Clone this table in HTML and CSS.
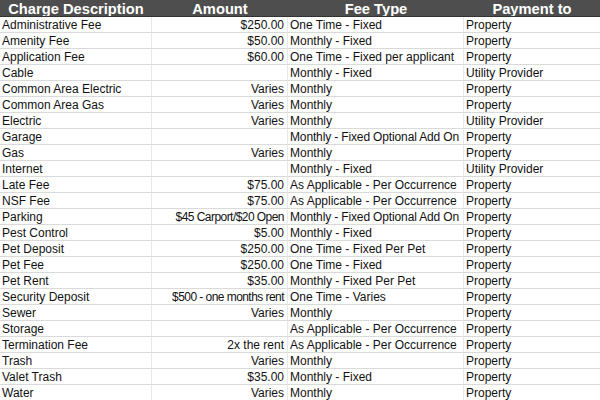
FILE: index.html
```html
<!DOCTYPE html>
<html>
<head>
<meta charset="utf-8">
<link rel="stylesheet" href="styles.css">
</head>
<body>
<div class="sheet">
  <div class="row head">
    <div class="c">Charge Description</div><div class="c">Amount</div><div class="c">Fee Type</div><div class="c">Payment to</div>
  </div>
  <div class="row"><div class="c">Administrative Fee</div><div class="c num">$250.00</div><div class="c">One Time - Fixed</div><div class="c">Property</div></div>
  <div class="row"><div class="c">Amenity Fee</div><div class="c num">$50.00</div><div class="c">Monthly - Fixed</div><div class="c">Property</div></div>
  <div class="row"><div class="c">Application Fee</div><div class="c num">$60.00</div><div class="c">One Time - Fixed per applicant</div><div class="c">Property</div></div>
  <div class="row"><div class="c">Cable</div><div class="c num"></div><div class="c">Monthly - Fixed</div><div class="c">Utility Provider</div></div>
  <div class="row"><div class="c">Common Area Electric</div><div class="c num">Varies</div><div class="c">Monthly</div><div class="c">Property</div></div>
  <div class="row"><div class="c">Common Area Gas</div><div class="c num">Varies</div><div class="c">Monthly</div><div class="c">Property</div></div>
  <div class="row"><div class="c">Electric</div><div class="c num">Varies</div><div class="c">Monthly</div><div class="c">Utility Provider</div></div>
  <div class="row"><div class="c">Garage</div><div class="c num"></div><div class="c"><span class="fit-m">Monthly - Fixed Optional Add On</span></div><div class="c">Property</div></div>
  <div class="row"><div class="c">Gas</div><div class="c num">Varies</div><div class="c">Monthly</div><div class="c">Property</div></div>
  <div class="row"><div class="c">Internet</div><div class="c num"></div><div class="c">Monthly - Fixed</div><div class="c">Utility Provider</div></div>
  <div class="row"><div class="c">Late Fee</div><div class="c num">$75.00</div><div class="c">As Applicable - Per Occurrence</div><div class="c">Property</div></div>
  <div class="row"><div class="c">NSF Fee</div><div class="c num">$75.00</div><div class="c">As Applicable - Per Occurrence</div><div class="c">Property</div></div>
  <div class="row"><div class="c">Parking</div><div class="c num"><span class="fit-s">$45 Carport/$20 Open</span></div><div class="c"><span class="fit-m">Monthly - Fixed Optional Add On</span></div><div class="c">Property</div></div>
  <div class="row"><div class="c">Pest Control</div><div class="c num">$5.00</div><div class="c">Monthly - Fixed</div><div class="c">Property</div></div>
  <div class="row"><div class="c">Pet Deposit</div><div class="c num">$250.00</div><div class="c">One Time - Fixed Per Pet</div><div class="c">Property</div></div>
  <div class="row"><div class="c">Pet Fee</div><div class="c num">$250.00</div><div class="c">One Time - Fixed</div><div class="c">Property</div></div>
  <div class="row"><div class="c">Pet Rent</div><div class="c num">$35.00</div><div class="c">Monthly - Fixed Per Pet</div><div class="c">Property</div></div>
  <div class="row"><div class="c">Security Deposit</div><div class="c num"><span class="fit-s">$500 - one months rent</span></div><div class="c">One Time - Varies</div><div class="c">Property</div></div>
  <div class="row"><div class="c">Sewer</div><div class="c num">Varies</div><div class="c">Monthly</div><div class="c">Property</div></div>
  <div class="row"><div class="c">Storage</div><div class="c num"></div><div class="c">As Applicable - Per Occurrence</div><div class="c">Property</div></div>
  <div class="row"><div class="c">Termination Fee</div><div class="c num">2x the rent</div><div class="c">As Applicable - Per Occurrence</div><div class="c">Property</div></div>
  <div class="row"><div class="c">Trash</div><div class="c num">Varies</div><div class="c">Monthly</div><div class="c">Property</div></div>
  <div class="row"><div class="c">Valet Trash</div><div class="c num">$35.00</div><div class="c">Monthly - Fixed</div><div class="c">Property</div></div>
  <div class="row"><div class="c">Water</div><div class="c num">Varies</div><div class="c">Monthly</div><div class="c">Property</div></div>
</div>
</body>
</html>
```
FILE: styles.css
```css
html, body {
  margin: 0;
  padding: 0;
  background: #ffffff;
  overflow: hidden;
}
.sheet {
  width: 600px;
  font-family: "Liberation Sans", Arial, sans-serif;
  font-size: 12px;
  color: #111111;
}
.row {
  display: grid;
  grid-template-columns: 152px 136px 176px 136px;
}
.c {
  box-sizing: border-box;
  height: 16px;
  padding: 1px 2px 0 2px;
  line-height: 14px;
  border-bottom: 1px solid #dadada;
  border-right: 1px solid #e8e8e8;
  white-space: nowrap;
  overflow: hidden;
}
.c:last-child {
  border-right: none;
}
.num {
  text-align: right;
  padding-right: 3px;
}
.fit-s {
  letter-spacing: -0.55px;
}
.fit-m {
  letter-spacing: -0.14px;
}
.head .c {
  height: 17px;
  background: #4e4e4e;
  color: #ffffff;
  font-weight: bold;
  font-size: 14.7px;
  line-height: 17px;
  padding: 1px 0 0 0;
  text-align: center;
  border-bottom: 1px solid #333333;
  border-right: none;
}
```
